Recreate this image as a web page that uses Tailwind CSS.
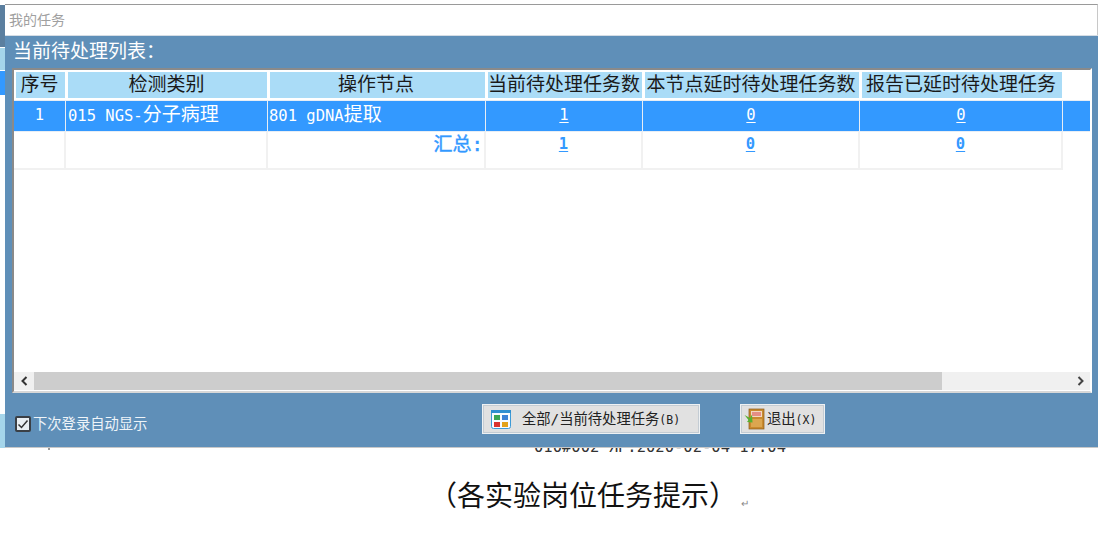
<!DOCTYPE html>
<html lang="zh-CN">
<head>
  <meta charset="UTF-8" />
  <title>我的任务</title>
  <script src="https://cdn.jsdelivr.net/npm/@tailwindcss/browser@4"></script>
</head>
<body class="bg-white font-['DejaVu_Sans_Mono','Noto_Sans_CJK_SC',monospace] overflow-hidden">
  <div class="relative w-[1099px] h-[537px] overflow-hidden">
    <!-- bits of the window behind -->
    <div class="absolute left-0 top-[5px] w-[5px] h-[42px] bg-[#5b7f9f]"></div>
    <div class="absolute left-0 top-[48px] w-[5px] h-[22px] bg-[#a5d5ea]"></div>
    <div class="absolute left-0 top-[71px] w-[5px] h-[24px] bg-[#3399ff]"></div>
    <div class="absolute left-0 top-[414px] w-[5px] h-[34px] bg-[#a5d5ea]"></div>
    <div class="absolute left-[48px] top-[440px] w-[2px] h-[10px] bg-[#999]"></div>
    <div class="absolute left-[534px] top-[439px] text-[15.5px] leading-[16px] whitespace-pre text-[#333]">010#002 ЯР:2020-02-04 17:04</div>

    <!-- dialog -->
    <div class="relative ml-[5px] pt-[4px] w-[1093px]">
      <div class="h-[31px] bg-white border-t border-[#9a9a9a] border-r border-r-[#c8c8c8] pl-[4px] pt-[6px] text-[14px] leading-[18px] text-[#a0a0a0]">我的任务</div>
      <div class="flex flex-col h-[413px] bg-[#5f8fb8] border-t border-[#d5dde5] border-b border-b-[#c8c8c8]">
        <div class="h-[32px] pl-[8px] pt-[3px] text-[19px] leading-[24px] text-white">当前待处理列表：</div>

        <div class="flex flex-col ml-[7px] w-[1080px] h-[325px] bg-white border-t-2 border-l-2 border-[#8a8a8a] border-r-2 border-r-white border-b-2 border-b-[#d8d8d8]">
          <div class="flex-1">
            <table class="table-fixed border-separate border-spacing-0 w-[1076px] text-[#1a1a1a]">
              <colgroup>
                <col class="w-[52px]" /><col class="w-[202px]" /><col class="w-[218px]" /><col class="w-[157px]" /><col class="w-[217px]" /><col class="w-[203px]" /><col class="w-[27px]" />
              </colgroup>
              <thead>
                <tr class="text-[19px] leading-[24px] font-normal">
                  <th class="h-[30px] p-0 pr-[2px] pb-[2px] font-normal text-center whitespace-nowrap bg-[#aadcf7] border-y-2 border-l-2 border-r border-white">序号</th>
                  <th class="h-[30px] p-0 pr-[2px] pb-[2px] font-normal text-center whitespace-nowrap bg-[#aadcf7] border-y-2 border-l-2 border-r border-white">检测类别</th>
                  <th class="h-[30px] p-0 pr-[3px] pb-[2px] font-normal text-center whitespace-nowrap bg-[#aadcf7] border-y-2 border-l-2 border-r border-white">操作节点</th>
                  <th class="h-[30px] p-0 pr-[2px] pb-[2px] font-normal text-center whitespace-nowrap bg-[#aadcf7] border-y-2 border-l-2 border-r border-white">当前待处理任务数</th>
                  <th class="h-[30px] p-0 pr-[2px] pb-[2px] font-normal text-center whitespace-nowrap bg-[#aadcf7] border-y-2 border-l-2 border-r border-white">本节点延时待处理任务数</th>
                  <th class="h-[30px] p-0 pr-[2px] pb-[2px] font-normal text-center whitespace-nowrap bg-[#aadcf7] border-y-2 border-l-2 border-r border-white overflow-hidden">报告已延时待处理任务</th>
                  <th class="p-0"></th>
                </tr>
              </thead>
              <tbody>
                <tr class="text-white text-[15.5px] leading-[26px]">
                  <td class="h-[32px] p-0 pb-[2px] bg-[#3399ff] border-y border-r border-[#e8eef5] text-center">1</td>
                  <td class="h-[32px] p-0 pb-[2px] pl-[2px] bg-[#3399ff] border-y border-r border-[#e8eef5] whitespace-nowrap">015 NGS-<span class="text-[19px]">分子病理</span></td>
                  <td class="h-[32px] p-0 pb-[2px] pl-[1px] bg-[#3399ff] border-y border-r border-[#e8eef5] whitespace-nowrap">801 gDNA<span class="text-[19px]">提取</span></td>
                  <td class="h-[32px] p-0 pb-[2px] bg-[#3399ff] border-y border-r border-[#e8eef5] text-center underline underline-offset-2">1</td>
                  <td class="h-[32px] p-0 pb-[2px] bg-[#3399ff] border-y border-r border-[#e8eef5] text-center underline underline-offset-2">0</td>
                  <td class="h-[32px] p-0 pb-[2px] bg-[#3399ff] border-y border-r border-[#e8eef5] text-center underline underline-offset-2">0</td>
                  <td class="h-[32px] p-0 bg-[#3399ff] border-y border-[#e8eef5]"></td>
                </tr>
                <tr class="text-[#3399ff] text-[15.5px] leading-[24px] font-bold align-top">
                  <td class="h-[38px] p-0 border-b-2 border-r-2 border-[#f1f1f1]"></td>
                  <td class="h-[38px] p-0 border-b-2 border-r-2 border-[#f1f1f1]"></td>
                  <td class="h-[38px] p-0 pr-[1px] border-b-2 border-r-2 border-[#f1f1f1] text-right text-[19px] font-normal [-webkit-text-stroke:0.4px_#3399ff]">汇总:</td>
                  <td class="h-[38px] p-0 border-b-2 border-r-2 border-[#f1f1f1] text-center underline underline-offset-2">1</td>
                  <td class="h-[38px] p-0 border-b-2 border-r-2 border-[#f1f1f1] text-center underline underline-offset-2">0</td>
                  <td class="h-[38px] p-0 border-b-2 border-r-2 border-[#f1f1f1] text-center underline underline-offset-2">0</td>
                  <td class="p-0"></td>
                </tr>
              </tbody>
            </table>
          </div>
          <!-- horizontal scrollbar -->
          <div class="flex h-[18px] mb-[1px] bg-[#f0f0f0]">
            <div class="flex items-center justify-center w-[20px]">
              <svg width="9" height="10" viewBox="0 0 9 10"><path d="M6.5 1 L2.5 5 L6.5 9" fill="none" stroke="#333" stroke-width="2"/></svg>
            </div>
            <div class="w-[908px] bg-[#cdcdcd]"></div>
            <div class="flex-1"></div>
            <div class="flex items-center justify-center w-[20px]">
              <svg width="9" height="10" viewBox="0 0 9 10"><path d="M2.5 1 L6.5 5 L2.5 9" fill="none" stroke="#444" stroke-width="2"/></svg>
            </div>
          </div>
        </div>

        <!-- footer -->
        <div class="flex items-start flex-1 pt-[11px]">
          <div class="flex items-center w-[477px] pl-[10px] pt-[11px]">
            <div class="flex items-center justify-center w-[16px] h-[16px] bg-[#e9eef2] border-2 border-[#3a3f45] rounded-[2px]">
              <svg width="12" height="12" viewBox="0 0 12 12"><path d="M1.5 6.5 L4.5 9.5 L10.5 2.5" fill="none" stroke="#333" stroke-width="1.5"/></svg>
            </div>
            <span class="ml-[2px] text-[14.3px] leading-[18px] text-[#eef4f9] whitespace-nowrap">下次登录自动显示</span>
          </div>
          <div class="flex items-center w-[218px] h-[30px] bg-[#e1e1e1] border-2 border-[#c4ccd3] outline outline-[#eef1f3] -outline-offset-1">
            <svg class="ml-[7px]" width="20" height="19" viewBox="0 0 20 19">
              <rect x="0.5" y="0.5" width="19" height="18" rx="2" fill="#f7fbff" stroke="#3d9ad6"/>
              <rect x="0" y="0" width="20" height="3" fill="#2f8fd0"/>
              <rect x="3" y="5" width="6" height="5" fill="#3aa655"/><rect x="11" y="5" width="6" height="5" fill="#3b82d6"/>
              <rect x="3" y="12" width="6" height="5" fill="#d9322e"/><rect x="11" y="12" width="6" height="5" fill="#e3a21a"/>
            </svg>
            <span class="ml-[11px] text-[14.3px] leading-[18px] text-[#222] whitespace-nowrap">全部/当前待处理任务<span class="text-[11.5px]">(B)</span></span>
          </div>
          <div class="flex items-center ml-[40px] w-[85px] h-[30px] bg-[#e1e1e1] border-2 border-[#c4ccd3] outline outline-[#eef1f3] -outline-offset-1">
            <svg class="ml-[2px]" width="21" height="22" viewBox="0 0 21 22">
              <rect x="5" y="1" width="15" height="20" fill="#c98a2e" stroke="#8a5a18" stroke-width="0.7"/>
              <rect x="7" y="3" width="11" height="6" fill="#f2d9c0"/>
              <path d="M8 5h9M8 7h9" stroke="#d8434a" stroke-width="1"/>
              <rect x="7" y="11" width="11" height="8" fill="#dca64f"/>
              <path d="M0.5 7 L6 10 L8 6.5 L8.5 14.5 L3 14 L4.5 12 Z" fill="#58b030"/>
            </svg>
            <span class="ml-[2px] text-[14.3px] leading-[18px] text-[#222] whitespace-nowrap">退出<span class="text-[11.5px]">(X)</span></span>
          </div>
        </div>
      </div>
    </div>

    <!-- caption -->
    <div class="flex items-end pl-[429px] mt-[27px] font-['Noto_Sans_CJK_SC',sans-serif] font-normal text-[28px] leading-[38px] text-[#111] whitespace-nowrap">（各实验岗位任务提示）<span class="ml-[4px] text-[10px] leading-[20px] text-[#888]">↵</span></div>
  </div>
</body>
</html>
